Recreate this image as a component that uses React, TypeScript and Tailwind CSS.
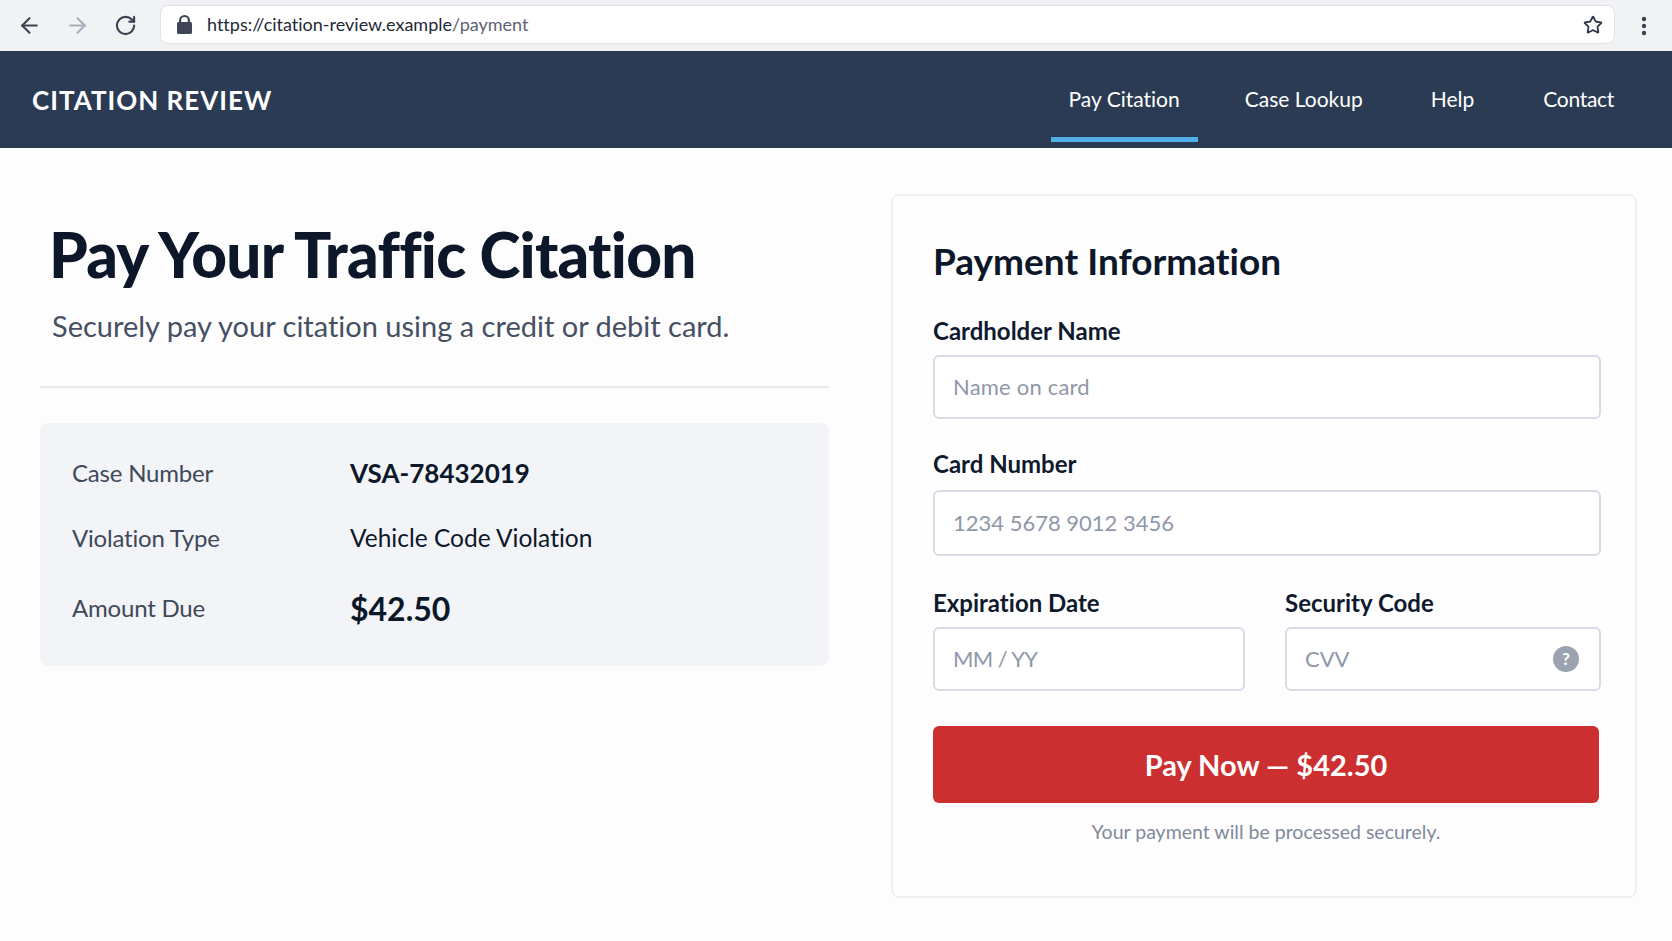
import React from "react";
import { ArrowLeft, ArrowRight, RotateCw, Star } from "lucide-react";

const inputCls =
  "w-full border-2 border-[#d8dce6] rounded-[6px] bg-white px-[18px] pb-[2px] text-[22px] text-[#1f2937] placeholder:text-[#8f98a8] outline-none";
const labelCls = "block text-[24px] leading-[30px] font-bold text-[#0f1a2e]";

function Row({ label, children, cls }: { label: string; children: React.ReactNode; cls: string }) {
  return (
    <div className={"flex items-center " + cls}>
      <div className="w-[278px] text-[24px] tracking-[-0.2px] text-[#3f4959]">{label}</div>
      <div>{children}</div>
    </div>
  );
}

export default function App() {
  return (
    <div className="h-[941px] w-[1672px] overflow-hidden bg-[#fdfdfe] font-['Lato',sans-serif] [font-variant-ligatures:none]">
      <div className="flex h-[51px] items-center bg-[#f1f2f4]">
        <div className="flex w-[160px] items-center pl-[17px] gap-[23px] text-[#3a4252]">
          <ArrowLeft size={25} strokeWidth={2} />
          <ArrowRight size={25} strokeWidth={2} className="text-[#a9afba]" />
          <RotateCw size={23} strokeWidth={2.2} className="ml-[1px]" />
        </div>
        <div className="mb-[2px] flex h-[39px] w-[1455px] items-center rounded-[8px] border border-[#e0e2e8] bg-white pl-[16px] pr-[11px]">
          <svg width="15" height="19" viewBox="0 0 15 19" className="fill-[#3d4556]">
            <path d="M2 7V5.2a5.5 5.2 0 0 1 11 0V7h.5A1.5 1.5 0 0 1 15 8.500v9A1.500 1.500 0 0 1 13.500 19h-12A1.500 1.500 0 0 1 0 17.500v-9A1.500 1.500 0 0 1 1.500 7H2zm2.200 0h6.600V5.200a3.300 3.200 0 0 0-6.600 0V7z" />
          </svg>
          <div className="ml-[15px] flex-1 text-[18px] text-[#1f2937]">
            https://citation-review.example<span className="text-[#5a6373]">/payment</span>
          </div>
          <Star size={20} strokeWidth={2.2} className="text-[#2f3747]" />
        </div>
        <div className="flex flex-1 justify-center">
          <svg width="6" height="20" viewBox="0 0 6 20" className="fill-[#3a4252]">
            <circle cx="3" cy="3" r="2.200" />
            <circle cx="3" cy="10" r="2.200" />
            <circle cx="3" cy="17" r="2.200" />
          </svg>
        </div>
      </div>

      <nav className="flex h-[97px] items-center justify-between bg-[#2b3b53] pl-[32px] pr-[39px]">
        <div className="pt-[2px] text-[26px] font-bold tracking-[1px] text-white">CITATION REVIEW</div>
        <div className="flex h-full items-stretch gap-[30px] text-[21px] text-white">
          <a className="mb-[6px] flex items-center border-b-[5px] border-[#4fb0ea] px-[18px] pt-[10px]">Pay Citation</a>
          <a className="flex items-center pl-[17px] pr-[19px] pb-[1px]">Case Lookup</a>
          <a className="flex items-center px-[19px] pb-[1px]">Help</a>
          <a className="flex items-center pl-[20px] pr-[19px] pb-[1px] tracking-[-0.3px]">Contact</a>
        </div>
      </nav>

      <main className="flex items-start justify-between pl-[40px] pr-[35px] pt-[46px]">
        <section className="w-[789px]">
          <h1 className="mt-[22px] ml-[9px] text-[62px] leading-[76px] font-black tracking-[-0.75px] text-[#0d172a]">Pay Your Traffic Citation</h1>
          <p className="ml-[12px] mt-[14px] text-[29px] leading-[40px] text-[#465062]">
            Securely pay your citation using a credit or debit card.
          </p>
          <div className="mt-[40px] h-[2px] bg-[#e9ebf1]" />
          <div className="mt-[35px] h-[243px] rounded-[8px] bg-[#f2f4f8] pl-[32px] pt-[27px]">
            <Row label="Case Number" cls="h-[46px]">
              <span className="text-[26px] font-bold text-[#0d172a]">VSA-78432019</span>
            </Row>
            <Row label="Violation Type" cls="h-[46px] mt-[19px]">
              <span className="text-[24.500px] text-[#0d172a]">Vehicle Code Violation</span>
            </Row>
            <Row label="Amount Due" cls="h-[46px] mt-[24px]">
              <span className="block pt-[2px] text-[32px] font-bold text-[#0d172a]">$42.50</span>
            </Row>
          </div>
        </section>

        <section className="h-[704px] w-[746px] rounded-[8px] border-2 border-[#f0f1f5] bg-[#fefefe] pl-[40px] pr-[34px] pt-[43px]">
          <h2 className="text-[37px] leading-[44px] font-bold text-[#0d172a]">Payment Information</h2>
          <label className={labelCls + " mt-[33px]"}>Cardholder Name</label>
          <input className={inputCls + " mt-[9px] h-[64px] tracking-[0.2px]"} placeholder="Name on card" />
          <label className={labelCls + " mt-[30px]"}>Card Number</label>
          <input className={inputCls + " mt-[11px] h-[66px]"} placeholder="1234 5678 9012 3456" />
          <div className="mt-[32px] flex gap-[40px]">
            <div className="w-[312px]">
              <label className={labelCls}>Expiration Date</label>
              <input className={inputCls + " mt-[9px] h-[64px] tracking-[-0.6px]"} placeholder="MM / YY" />
            </div>
            <div className="relative flex-1">
              <label className={labelCls}>Security Code</label>
              <input className={inputCls + " mt-[9px] h-[64px]"} placeholder="CVV" />
              <span className="absolute right-[22px] bottom-[19px] flex h-[26px] w-[26px] items-center justify-center rounded-full bg-[#9ba2b0] text-[17px] font-bold text-white">?</span>
            </div>
          </div>
          <button className="mt-[35px] h-[77px] w-[666px] rounded-[6px] bg-[#cc2f2f] text-[29px] font-bold text-white">
            Pay Now — $42.50
          </button>
          <p className="mt-[14px] w-[666px] text-center text-[19.500px] text-[#818a9a]">Your payment will be processed securely.</p>
        </section>
      </main>
    </div>
  );
}
